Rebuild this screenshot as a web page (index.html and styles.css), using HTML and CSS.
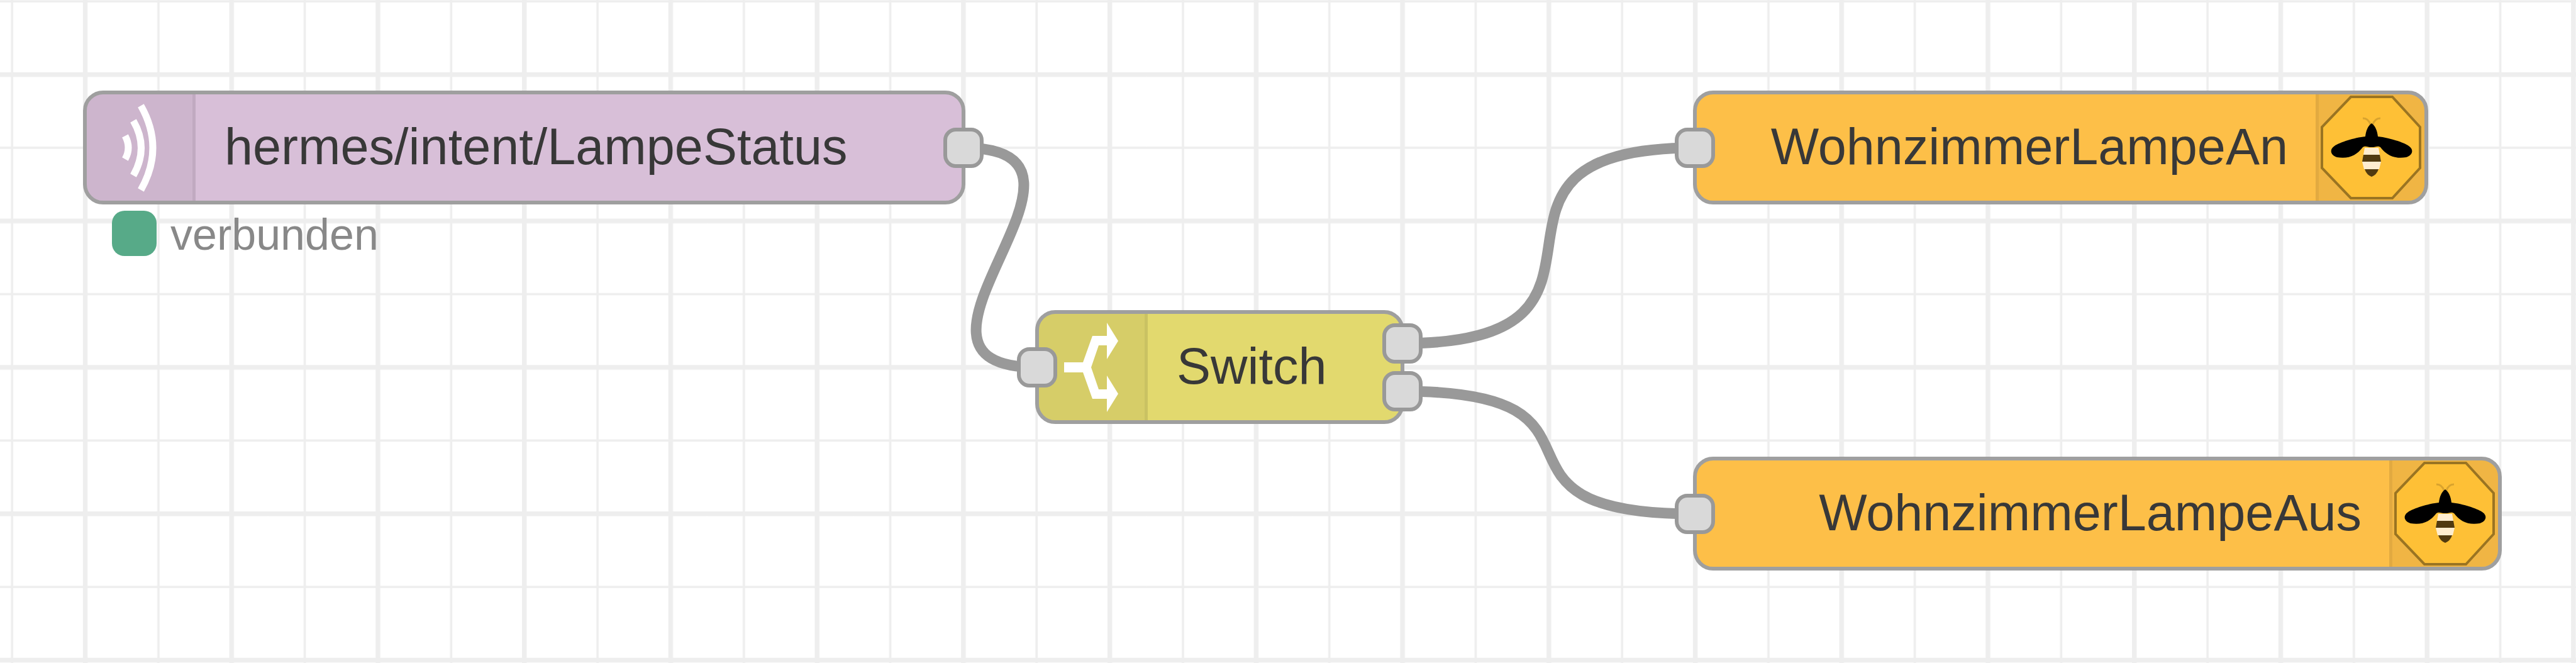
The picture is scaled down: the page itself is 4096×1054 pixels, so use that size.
FILE: index.html
```html
<!DOCTYPE html>
<html lang="de">
<head>
<meta charset="utf-8">
<title>Flow: LampeStatus</title>
<link rel="stylesheet" href="styles.css">
</head>
<body>
<main class="workspace">
  <svg class="canvas" aria-hidden="true">
    <defs>
      <pattern id="grid" width="440" height="440" patternUnits="userSpaceOnUse" patternTransform="translate(-39 -56) scale(.52893)">
        <path class="grid-minor" d="M110 0V440M0 110H440"/>
        <path class="grid-major" d="M330 0V440M0 330H440"/>
      </pattern>
      <symbol id="icon-bee" viewBox="0 0 168 169">
        <path d="M51 4H117L161 52V117L117 165H51L5 117V52Z" fill="#fec036" stroke="#9a7422" stroke-width="4"/>
        <path d="M82 48Q79 38 70 38M86 48Q89 38 98 38" fill="none" stroke="#d9a32e" stroke-width="3"/>
        <path d="M84 46C90 50 93 58 94 67C112 69 134 76 143 82C152 88 149 97 139 100C120 103 108 97 98 84C94 81 90 84 84 84C78 84 74 81 70 84C60 97 48 103 29 100C19 97 16 88 25 82C34 76 56 69 74 67C75 58 78 50 84 46Z" fill="#000"/>
        <path d="M73 85H95L97 96H71Z" fill="#ffedcf"/>
        <path d="M71 96H97L99 107H69Z" fill="#513a10"/>
        <path d="M69 107H99L96 119H72Z" fill="#ffedcf"/>
        <path d="M73 119H95Q92 128 84 131Q76 128 73 119Z" fill="#513a10"/>
      </symbol>
    </defs>
    <rect width="100%" height="100%" fill="url(#grid)"/>
    <path class="wire" d="M1532 235C1808 235 1372 584 1648 584"/>
    <path class="wire" d="M2230 546C2650 546 2275 235 2695 235"/>
    <path class="wire" d="M2230 622C2608 622 2317 817 2695 817"/>
  </svg>

  <section class="node node-intent">
    <div class="node-icon">
      <svg viewBox="0 0 168 169" fill="none" stroke="#fff" stroke-width="11" aria-hidden="true">
        <path d="M61 66Q71 85 61 103M74 42Q99 85 74 129M86 18Q124 85 86 152"/>
      </svg>
    </div>
    <span class="node-label">hermes/intent/LampeStatus</span>
    <i class="port port-out"></i>
    <div class="status"><i class="status-dot"></i><span>verbunden</span></div>
  </section>

  <section class="node node-switch">
    <div class="node-icon">
      <svg viewBox="0 0 168 169" fill="#fff" aria-hidden="true">
        <path d="M40 77H70L85 35H108V14L126 43L108 72V50H95L83 85L95 120H108V98L126 127L108 156V135H85L70 93H40Z"/>
      </svg>
    </div>
    <span class="node-label">Switch</span>
    <i class="port port-in"></i>
    <i class="port port-out port-first"></i>
    <i class="port port-out port-second"></i>
  </section>

  <section class="node node-reverse node-lamp-on">
    <div class="node-icon"><svg aria-hidden="true"><use href="#icon-bee"/></svg></div>
    <span class="node-label">WohnzimmerLampeAn</span>
    <i class="port port-in"></i>
  </section>

  <section class="node node-reverse node-lamp-off">
    <div class="node-icon"><svg aria-hidden="true"><use href="#icon-bee"/></svg></div>
    <span class="node-label">WohnzimmerLampeAus</span>
    <i class="port port-in"></i>
  </section>
</main>
</body>
</html>
```
FILE: styles.css
```css
* {
  box-sizing: border-box;
}

body {
  margin: 0;
  background: #fff;
  font-family: "Liberation Sans", Arial, sans-serif;
}

.workspace {
  position: relative;
  min-height: 100vh;
  overflow: hidden;
}

.canvas {
  position: absolute;
  inset: 0;
  width: 100%;
  height: 100%;
}

.grid-minor,
.grid-major {
  fill: none;
  stroke: #eee;
  stroke-width: 7px;
}

.grid-major {
  stroke-width: 14px;
}

.wire {
  fill: none;
  stroke: #999;
  stroke-width: 17px;
}

/* Nodes, placed on the free canvas */
.node {
  position: absolute;
  display: flex;
  height: 181px;
  border: 6px solid #9f9f9f;
  border-radius: 32px;
  color: #383838;
  font-size: 81px;
  line-height: 96px;
  white-space: nowrap;
}

.node-intent {
  left: 132px;
  top: 144px;
  width: 1403px;
  background: #d8bfd8;
}

.node-switch {
  left: 1646px;
  top: 493px;
  width: 587px;
  background: #e2d96e;
}

.node-lamp-on,
.node-lamp-off {
  left: 2692px;
  background: #fdbf48;
}

.node-lamp-on {
  top: 144px;
  width: 1169px;
}

.node-lamp-off {
  top: 726px;
  width: 1286px;
}

.node-reverse {
  flex-direction: row-reverse;
}

.node-icon {
  flex: none;
  width: 173px;
  background: rgba(0, 0, 0, 0.05);
  border-right: 5px solid rgba(0, 0, 0, 0.06);
  border-radius: 26px 0 0 26px;
}

.node-reverse .node-icon {
  border-right: 0;
  border-left: 5px solid rgba(0, 0, 0, 0.06);
  border-radius: 0 26px 26px 0;
}

.node-icon svg {
  display: block;
  width: 168px;
  height: 169px;
}

.node-label {
  align-self: center;
  padding: 0 44px 4px 46px;
}

.port {
  position: absolute;
  top: calc(50% - 32px);
  width: 64px;
  height: 64px;
  border: 6px solid #999;
  border-radius: 20px;
  background: #d9d9d9;
}

.port-in {
  left: -35px;
}

.port-out {
  right: -35px;
}

.port-first {
  top: calc(50% - 70px);
}

.port-second {
  top: calc(50% + 6px);
}

.status {
  position: absolute;
  left: 40px;
  top: 183px;
  display: flex;
  align-items: flex-start;
  gap: 22px;
  color: #888;
  font-size: 70px;
  line-height: 80px;
}

.status-dot {
  width: 71px;
  height: 72px;
  margin-top: 2px;
  border-radius: 20px;
  background: #57aa88;
}
```
